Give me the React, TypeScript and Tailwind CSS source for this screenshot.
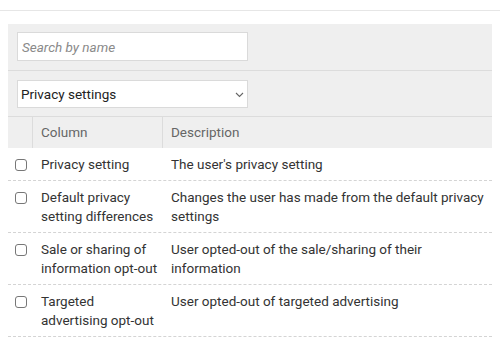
import { useState } from "react";

interface Field {
  id: string;
  column: string;
  description: string;
}

const fields: Field[] = [
  { id: "privacy", column: "Privacy setting", description: "The user's privacy setting" },
  {
    id: "diff",
    column: "Default privacy setting differences",
    description: "Changes the user has made from the default privacy settings",
  },
  {
    id: "sale",
    column: "Sale or sharing of information opt-out",
    description: "User opted-out of the sale/sharing of their information",
  },
  {
    id: "targeted",
    column: "Targeted advertising opt-out",
    description: "User opted-out of targeted advertising",
  },
];

function App() {
  const [search, setSearch] = useState("");
  const [checked, setChecked] = useState<string[]>([]);

  function toggle(id: string) {
    setChecked(checked.includes(id) ? checked.filter((c) => c !== id) : [...checked, id]);
  }

  const rows = fields.filter((f) => f.column.toLowerCase().includes(search.toLowerCase()));

  return (
    <div className="w-[500px] h-[343px] bg-white text-[13.5px] text-[#333] font-['Roboto',sans-serif] overflow-hidden">
      <div className="h-[10px]" />
      <div className="border-t border-[#e6e6e6] pt-[13px] px-2">
        <div className="bg-[#efefef]">
          <div className="px-[9px] pt-2 pb-[9px] border-b border-[#dcdcdc]">
            <input
              type="text"
              value={search}
              onChange={(e) => setSearch(e.target.value)}
              placeholder="Search by name"
              className="block w-[231px] h-[29px] bg-white border border-[#dadada] px-[4px] text-[13.5px] placeholder:italic placeholder:text-[#8a8a8a] outline-none"
            />
          </div>
          <div className="px-[9px] pt-[9px] pb-[8px] border-b border-[#dcdcdc]">
            <div className="relative w-[231px] h-[28px] bg-white border border-[#dadada]">
              <select className="appearance-none w-full h-full bg-transparent pl-[3px] text-[13.5px] text-[#222] outline-none">
                <option>Privacy settings</option>
              </select>
              <svg
                className="absolute right-[3px] top-[11px] pointer-events-none"
                width="9"
                height="6"
                viewBox="0 0 9 6"
                fill="none"
                stroke="#666"
                strokeWidth="1.1"
              >
                <path d="M1 1l3.5 3.5L8 1" />
              </svg>
            </div>
          </div>
          <div className="grid grid-cols-[25px_130px_1fr] h-[31px] items-center text-[#666]">
            <div className="h-full border-r border-[#dcdcdc]" />
            <div className="h-full flex items-center px-2 border-r border-[#dcdcdc]">Column</div>
            <div className="px-2">Description</div>
          </div>
        </div>
        {rows.map((f) => (
          <div
            key={f.id}
            className="grid grid-cols-[25px_130px_1fr] pt-[7px] pb-[6px] leading-[19px] border-b border-dashed border-[#d4d4d4]"
          >
            <div className="flex pt-[4px] pl-[7px]">
              <input
                type="checkbox"
                checked={checked.includes(f.id)}
                onChange={() => toggle(f.id)}
                className="appearance-none w-[12px] h-[12px] border border-[#777] rounded-[3px] bg-white checked:bg-[#555]"
              />
            </div>
            <div className="pl-2 pr-1">{f.column}</div>
            <div className="px-2">{f.description}</div>
          </div>
        ))}
      </div>
    </div>
  );
}

export default App;
